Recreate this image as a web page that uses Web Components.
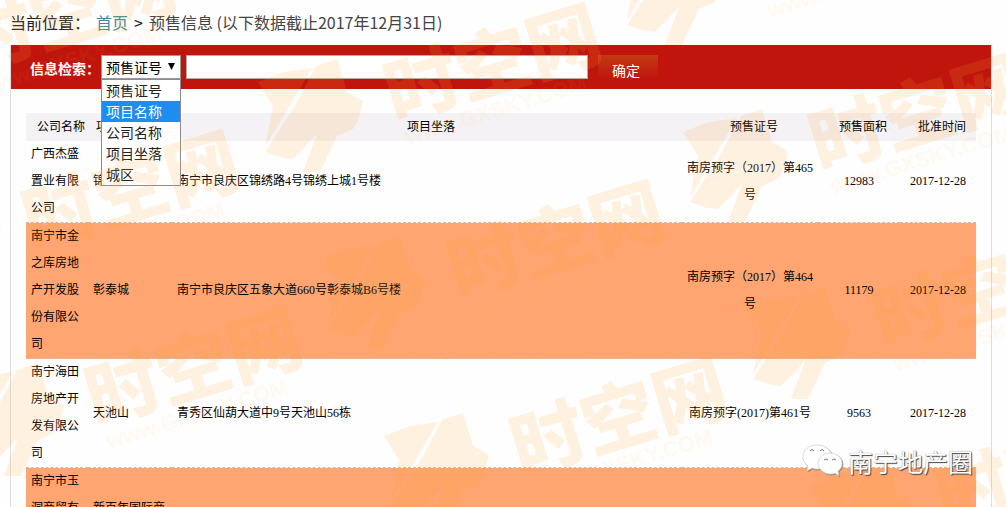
<!DOCTYPE html>
<html lang="zh-CN">
<head>
<meta charset="utf-8">
<title>预售信息</title>
<style>
    body {
        margin: 0;
        height: 100vh;
        overflow: hidden;
        background: #fffefe;
        color: #222;
        font-family: "Noto Sans CJK SC", sans-serif;
    }
</style>
</head>
<body>
<presale-page>
    <bread-crumb slot="top">
        <a slot="home" href="#">首页</a>
        预售信息 (以下数据截止2017年12月31日)
    </bread-crumb>
    <search-bar label="信息检索："></search-bar>
    <presale-table></presale-table>
</presale-page>
<tiled-mark></tiled-mark>
<account-badge>南宁地产圈</account-badge>

<script>
class PresalePage extends HTMLElement {
    constructor() {
        super();
        this.attachShadow({ mode: 'open' });
    }

    connectedCallback() {
        this.shadowRoot.innerHTML = `
            <style>
                :host {
                    display: block;
                    padding: 0 14px 0 10px;
                }
                main {
                    border: 1px solid #ddd;
                    border-top: 0;
                }
            </style>
            <slot name="top"></slot>
            <main><slot></slot></main>
        `;
    }
}

class BreadCrumb extends HTMLElement {
    constructor() {
        super();
        this.attachShadow({ mode: 'open' });
    }

    connectedCallback() {
        this.shadowRoot.innerHTML = `
            <style>
                :host {
                    display: flex;
                    gap: 6px;
                    height: 45px;
                    line-height: 45px;
                    font-size: 16px;
                    color: #444;
                    white-space: nowrap;
                }
                .place { color: #222; }
                ::slotted(a) {
                    color: #3a8c9c;
                    text-decoration: none;
                }
            </style>
            <span class="place">当前位置：</span>
            <slot name="home"></slot>
            <span class="place">&gt;</span>
            <span><slot></slot></span>
        `;
    }
}

class SearchBar extends HTMLElement {
    constructor() {
        super();
        this.attachShadow({ mode: 'open' });
        this.fields = ['预售证号', '项目名称', '公司名称', '项目坐落', '城区'];
        this.active = 1;
    }

    connectedCallback() {
        this.shadowRoot.innerHTML = `
            <style>
                :host {
                    display: block;
                    background: #c0150d;
                }
                form {
                    display: flex;
                    align-items: center;
                    height: 44px;
                    padding-left: 19px;
                    font-size: 14px;
                }
                label {
                    color: #fff;
                    font-weight: bold;
                    margin-top: 2px;
                }
                .picker {
                    position: relative;
                    width: 80px;
                    margin-left: 1px;
                }
                select, input, button {
                    box-sizing: border-box;
                    font: inherit;
                    border-radius: 0;
                    margin: 0;
                }
                select {
                    display: block;
                    appearance: none;
                    width: 100%;
                    height: 24px;
                    padding: 0 4px;
                    border: 1px solid #999;
                    background: #fff;
                    color: #000;
                }
                .arrow {
                    position: absolute;
                    right: 6px;
                    top: 8px;
                    width: 7px;
                    height: 7px;
                    pointer-events: none;
                }
                ul {
                    position: absolute;
                    z-index: 2;
                    top: 24px;
                    left: 0;
                    right: 0;
                    margin: 0;
                    padding: 0;
                    list-style: none;
                    background: #fff;
                    border: 1px solid #8a8a9a;
                    color: #222;
                }
                li {
                    height: 21px;
                    line-height: 21px;
                    padding-left: 4px;
                }
                li.on {
                    background: #1e8cf0;
                    color: #fff;
                }
                input {
                    width: 402px;
                    height: 24px;
                    margin-left: 5px;
                    padding: 0 4px;
                    border: 1px solid #b8a8a8;
                    background: #fff;
                }
                button {
                    width: 60px;
                    height: 34px;
                    margin-left: 10px;
                    align-self: flex-end;
                    padding: 0 4px 4px 0;
                    border: 0;
                    color: #fff;
                    background: linear-gradient(#c23a12, #c0150d 70%);
                }
            </style>
            <form>
                <label for="field">${this.getAttribute('label')}</label>
                <div class="picker">
                    <select id="field">
                        ${this.fields.map(f => `<option>${f}</option>`).join('')}
                    </select>
                    <svg class="arrow" viewBox="0 0 7 7"><path d="M0 0h7L3.500 7z"/></svg>
                    <ul>
                        ${this.fields.map((f, i) => `<li class="${i === this.active ? 'on' : ''}">${f}</li>`).join('')}
                    </ul>
                </div>
                <input type="text" aria-label="关键字">
                <button type="button">确定</button>
            </form>
        `;
    }
}

class PresaleTable extends HTMLElement {
    constructor() {
        super();
        this.attachShadow({ mode: 'open' });
        this.heads = ['公司名称', '项目名称', '项目坐落', '预售证号', '预售面积', '批准时间'];
        this.rows = [
            ['广西杰盛置业有限公司', '锦绣上城', '南宁市良庆区锦绣路4号锦绣上城1号楼', '南房预字（2017）第465号', '12983', '2017-12-28'],
            ['南宁市金之库房地产开发股份有限公司', '彰泰城', '南宁市良庆区五象大道660号彰泰城B6号楼', '南房预字（2017）第464号', '11179', '2017-12-28'],
            ['南宁海田房地产开发有限公司', '天池山', '青秀区仙葫大道中9号天池山56栋', '南房预字(2017)第461号', '9563', '2017-12-28'],
            ['南宁市玉洞商贸有限公司', '新百年国际商', '', '', '', '']
        ];
    }

    connectedCallback() {
        this.shadowRoot.innerHTML = `
            <style>
                :host {
                    display: block;
                    padding: 24px 15px;
                }
                table {
                    width: 100%;
                    table-layout: fixed;
                    border-collapse: separate;
                    border-spacing: 0;
                    font-family: "Liberation Serif", "Noto Sans CJK SC", serif;
                    font-size: 12px;
                    line-height: 27px;
                    color: #000;
                }
                .company { width: 62px; }
                .project { width: 84px; }
                .permit { width: 136px; }
                .area { width: 82px; }
                .date { width: 76px; }
                th {
                    height: 28px;
                    padding: 0 0 0 8px;
                    font-weight: normal;
                    background: #f4f2f4;
                }
                th:nth-child(2) { text-align: left; }
                td {
                    padding: 0 5px;
                    border-bottom: 1px dashed #d8b8a8;
                }
                td:nth-child(n+4) { text-align: center; }
                tbody tr:nth-child(even) { background: #ffa571; }
            </style>
            <table>
                <colgroup>
                    <col class="company"><col class="project"><col>
                    <col class="permit"><col class="area"><col class="date">
                </colgroup>
                <thead>
                    <tr>${this.heads.map(h => `<th>${h}</th>`).join('')}</tr>
                </thead>
                <tbody>
                    ${this.rows.map(r => `<tr>${r.map(c => `<td>${c}</td>`).join('')}</tr>`).join('')}
                </tbody>
            </table>
        `;
    }
}

// site mark repeated on a slanted grid over the whole page
class TiledMark extends HTMLElement {
    constructor() {
        super();
        this.attachShadow({ mode: 'open' });
    }

    connectedCallback() {
        this.shadowRoot.innerHTML = `
            <style>
                :host {
                    position: absolute;
                    inset: 0;
                    z-index: 5;
                    overflow: hidden;
                    pointer-events: none;
                }
                svg {
                    display: block;
                    width: 100%;
                    height: 100%;
                }
                .name { font: 900 74px "Noto Sans CJK SC", sans-serif; }
                .url { font: bold 22px "Liberation Sans", sans-serif; opacity: .4; }
            </style>
            <svg fill="#ffa528" fill-opacity=".14">${this.marks()}</svg>
        `;
    }

    marks() {
        let out = '';
        for (let row = -1; row < 3; row++) {
            for (let col = -1; col < 3; col++) {
                const x = 376 + col * 425 + row * 63;
                const y = 54 + col * 50 + row * 177;
                if (x < -260 || x > 1130 || y < -80 || y > 620) continue;
                out += `
                    <g transform="translate(${x} ${y})">
                        <path d="M-118 28L-92 18L-64 14L-84 48L-111 93L-103 52Z
                                 M-60 12L-39 5L-29 38L-13 47L-17 64L-23 75L-39 82L-56 118L-73 118L-59 80L-83 105L-96 103L-111 98L-80 50Z"/>
                        <g transform="rotate(-17)">
                            <text class="name" x="-2" y="70">时空网</text>
                            <text class="url" x="4" y="96">www.GXSKY.COM</text>
                        </g>
                    </g>`;
            }
        }
        return out;
    }
}

class AccountBadge extends HTMLElement {
    constructor() {
        super();
        this.attachShadow({ mode: 'open' });
    }

    connectedCallback() {
        this.shadowRoot.innerHTML = `
            <style>
                :host {
                    position: absolute;
                    right: 33px;
                    bottom: 28px;
                    z-index: 6;
                    display: flex;
                    align-items: center;
                    gap: 5px;
                    font-size: 25px;
                    line-height: 36px;
                    color: #fff;
                    text-shadow: 1px 1px 1px #444, 0 0 1px #777;
                }
                svg {
                    width: 41px;
                    height: 34px;
                    filter: drop-shadow(1px 1px 0 #a08878);
                }
            </style>
            <svg viewBox="0 0 41 34" fill="#fff" stroke="#ccc" stroke-width=".7">
                <path d="M15 1C7 1 1 6 1 13c0 4 2 7 5 9l-1 5 5-3c2 1 4 1 6 1 8 0 14-5 14-12S23 1 15 1z"/>
                <path d="M28 9c-7 0-12 5-12 10s5 11 12 11c2 0 4 0 5-1l4 3-1-5c3-2 4-5 4-8 0-5-5-10-12-10z"/>
                <g fill="none" stroke="#777" stroke-width="1">
                    <path d="M8 7q2-3 4 0M18 7q2-3 4 0M22 16q2-2 4 0M30 16q2-2 4 0"/>
                </g>
            </svg>
            <slot></slot>
        `;
    }
}

customElements.define('presale-page', PresalePage);
customElements.define('bread-crumb', BreadCrumb);
customElements.define('search-bar', SearchBar);
customElements.define('presale-table', PresaleTable);
customElements.define('tiled-mark', TiledMark);
customElements.define('account-badge', AccountBadge);
</script>
</body>
</html>
